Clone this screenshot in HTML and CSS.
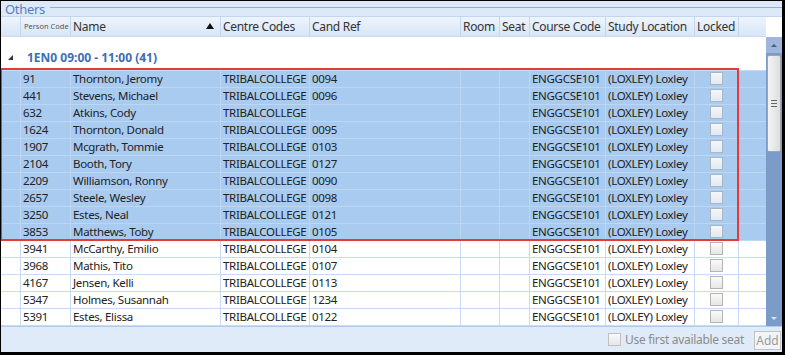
FILE: index.html
```html
<!DOCTYPE html>
<html lang="en">
<head>
<meta charset="UTF-8">
<title>Others - Seating</title>
<link rel="stylesheet" href="styles.css">
</head>
<body>

<div class="window">
    <div class="panel-title">
        <span class="panel-name">Others</span>
        <span class="panel-rule"></span>
    </div>

    <div class="grid">
        <div class="grid-main">
            <div class="row head">
                <div class="cell ind"></div>
                <div class="cell tiny">Person Code</div>
                <div class="cell sorted">Name <span class="sort-up"></span></div>
                <div class="cell">Centre Codes</div>
                <div class="cell">Cand Ref</div>
                <div class="cell">Room</div>
                <div class="cell">Seat</div>
                <div class="cell">Course Code</div>
                <div class="cell">Study Location</div>
                <div class="cell">Locked</div>
                <div class="cell fill"></div>
            </div>

            <div class="group-row">
                <span class="expander"></span>
                <span class="group-title">1EN0 09:00 - 11:00 (41)</span>
            </div>

            <div id="rows"></div>
        </div>

        <div class="vscroll">
            <div class="vscroll-gap"></div>
            <div class="vscroll-track">
                <div class="vbtn up"><span></span></div>
                <div class="thumb"><span class="grip"></span></div>
                <div class="track-rest"></div>
                <div class="vbtn down"><span></span></div>
            </div>
        </div>
    </div>

    <div class="footer">
        <label class="seat-opt"><span class="check"></span>Use first available seat</label>
        <button class="btn-add" disabled>Add</button>
    </div>

    <!-- highlight box drawn over the selected candidates -->
    <div class="sel-frame"></div>
</div>

<script>
    var candidates = [
        ['91', 'Thornton, Jeromy', '0094'],
        ['441', 'Stevens, Michael', '0096'],
        ['632', 'Atkins, Cody', ''],
        ['1624', 'Thornton, Donald', '0095'],
        ['1907', 'Mcgrath, Tommie', '0103'],
        ['2104', 'Booth, Tory', '0127'],
        ['2209', 'Williamson, Ronny', '0090'],
        ['2657', 'Steele, Wesley', '0098'],
        ['3250', 'Estes, Neal', '0121'],
        ['3853', 'Matthews, Toby', '0105'],
        ['3941', 'McCarthy, Emilio', '0104'],
        ['3968', 'Mathis, Tito', '0107'],
        ['4167', 'Jensen, Kelli', '0113'],
        ['5347', 'Holmes, Susannah', '1234'],
        ['5391', 'Estes, Elissa', '0122']
    ];

    var html = '';
    candidates.forEach(function(c, i) {
        html += '<div class="row' + (i < 10 ? ' sel' : '') + '">' +
            '<div class="cell ind"></div>' +
            '<div class="cell">' + c[0] + '</div>' +
            '<div class="cell">' + c[1] + '</div>' +
            '<div class="cell">TRIBALCOLLEGE</div>' +
            '<div class="cell">' + c[2] + '</div>' +
            '<div class="cell"></div>' +
            '<div class="cell"></div>' +
            '<div class="cell">ENGGCSE101</div>' +
            '<div class="cell">(LOXLEY) Loxley</div>' +
            '<div class="cell lock"><span class="check"></span></div>' +
            '<div class="cell fill"></div>' +
            '</div>';
    });
    document.getElementById('rows').innerHTML = html;
</script>

</body>
</html>
```

FILE: styles.css
```css
body {
    margin: 0;
    font-family: "Noto Sans", "Open Sans", sans-serif;
    font-size: 11.5px;
    letter-spacing: -0.3px;
    color: #222;
    background: #fff;
}
.window {
    position: relative;
    width: 785px;
    height: 355px;
    box-sizing: border-box;
    border: solid #000;
    border-width: 1px 3px 3px 1px;
    display: flex;
    flex-direction: column;
    background: #fff;
    overflow: hidden;
}

/* group box title */
.panel-title {
    height: 16px;
    box-sizing: border-box;
    display: flex;
    align-items: center;
    gap: 5px;
    padding-left: 4px;
    background: #dde9f8;
    border-bottom: 1px solid #c2d6ef;
}
.panel-name {
    color: #5580bd;
    font-size: 13px;
    line-height: 14px;
}
.panel-rule {
    flex: 1;
    height: 1px;
    margin-top: -2px;
    background: #8fb0dc;
}

/* grid */
.grid {
    display: flex;
    height: 309px;
}
.grid-main {
    flex: 1;
}
.row {
    display: grid;
    grid-template-columns: 20px 50px 150px 89px 151px 39px 30px 76px 89px 44px 1fr;
    height: 17px;
    box-sizing: border-box;
    border-bottom: 1px solid #c6dbf5;
    line-height: 16px;
}
.cell {
    border-right: 1px solid #c6dbf5;
    padding-left: 2px;
    white-space: nowrap;
    overflow: hidden;
}
.cell.fill {
    border-right: none;
}
.row.sel {
    background: #a9cbf0;
    border-bottom-color: #bcd6f4;
}
.row.sel .cell {
    border-right-color: #bcd6f4;
}

.row.head {
    height: 20px;
    line-height: 19px;
    font-size: 12px;
    background: linear-gradient(#eef4fc, #d7e6f8);
    border-bottom: 1px solid #c9dbf1;
    color: #333;
}
.row.head .cell {
    border-right-color: #c3d7f0;
}
.row.head .tiny {
    font-size: 7.5px;
    letter-spacing: 0;
    color: #555;
    padding-left: 3px;
}
.row.head .sorted {
    display: flex;
    justify-content: space-between;
    align-items: center;
    padding-right: 6px;
}
.sort-up {
    width: 0;
    height: 0;
    border-left: 4px solid transparent;
    border-right: 4px solid transparent;
    border-bottom: 6px solid #111;
    margin-top: -2px;
}

.group-row {
    height: 34px;
    box-sizing: border-box;
    border-bottom: 1px solid #c6dbf5;
    display: flex;
    align-items: center;
    padding-top: 8px;
}
.expander {
    width: 0;
    height: 0;
    margin: 0 14px 0 7px;
    border-left: 5px solid transparent;
    border-bottom: 5px solid #333;
}
.group-title {
    color: #3d6db3;
    font-weight: bold;
    font-size: 12px;
    letter-spacing: 0;
}

.lock {
    display: flex;
    justify-content: center;
    padding: 1px 0 0 0;
}
.check {
    display: inline-block;
    width: 11px;
    height: 11px;
    border: 1px solid #b4b4b4;
    background: linear-gradient(#fafafa, #e6e6e6);
}
.row.sel .check {
    border-color: #a9b6c6;
    background: linear-gradient(#f4f7fb, #e3e9f1);
}

/* vertical scrollbar */
.vscroll {
    width: 16px;
    display: flex;
    flex-direction: column;
}
.vscroll-gap {
    height: 20px;
}
.vscroll-track {
    flex: 1;
    display: flex;
    flex-direction: column;
    background: #7c9cc8;
}
.vbtn {
    height: 16px;
    display: flex;
    align-items: center;
    justify-content: center;
}
.vbtn.up {
    background: #9db6d9;
}
.vbtn span {
    width: 0;
    height: 0;
    border-left: 3px solid transparent;
    border-right: 3px solid transparent;
}
.vbtn.up span {
    border-bottom: 3px solid #4b5d78;
}
.vbtn.down span {
    border-top: 3px solid #d8e2f0;
}
.thumb {
    height: 95px;
    margin: 2px 1px 0;
    border: 1px solid #9aa6b5;
    border-radius: 2px;
    background: linear-gradient(90deg, #f4f4f4, #dedede);
    display: flex;
    align-items: center;
    justify-content: center;
}
.grip {
    width: 6px;
    height: 5px;
    border-top: 1px solid #666;
    border-bottom: 1px solid #666;
    background: linear-gradient(#666, #666) center / 6px 1px no-repeat;
}
.track-rest {
    flex: 1;
}

/* footer */
.footer {
    flex: 1;
    box-sizing: border-box;
    border-top: 1px solid #b3cbea;
    background: #e0ebf9;
    display: flex;
    align-items: center;
    justify-content: flex-end;
    gap: 10px;
    padding-right: 1px;
}
.seat-opt {
    display: flex;
    align-items: center;
    gap: 4px;
    color: #8c8c8c;
    font-size: 12px;
}
.seat-opt .check {
    width: 11px;
    height: 11px;
    border-color: #c0c0c0;
}
.btn-add {
    font-family: inherit;
    font-size: 12px;
    color: #9a9a9a;
    width: 27px;
    height: 19px;
    padding: 0;
    border: 1px solid #c2c2c2;
    background: #f2f4f7;
    margin-top: 2px;
}

.sel-frame {
    position: absolute;
    left: -1px;
    top: 67px;
    width: 739px;
    height: 173px;
    box-sizing: border-box;
    border: 2px solid #e53b35;
    pointer-events: none;
}
```
